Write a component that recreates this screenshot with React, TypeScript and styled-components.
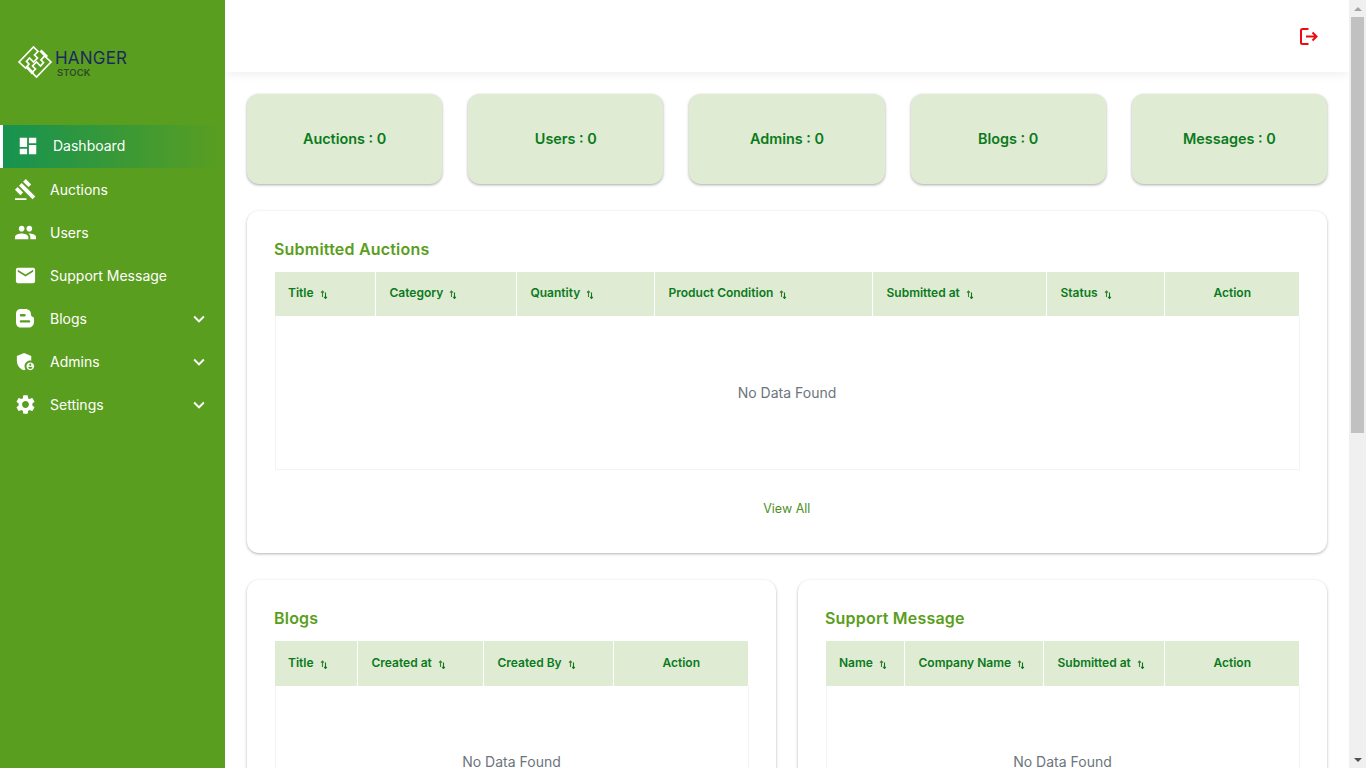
import React from "react";
import styled, { createGlobalStyle } from "styled-components";
import {
  MdDashboard,
  MdGavel,
  MdPeople,
  MdEmail,
  MdAdminPanelSettings,
  MdSettings,
  MdKeyboardArrowDown,
} from "react-icons/md";

const FONT = `"Inter", "Noto Sans", "Liberation Sans", sans-serif`;
const GREEN = "#5a9e20";
const DARK_GREEN = "#0a7a1c";
const PALE = "#dfebd3";

const GlobalStyle = createGlobalStyle`
  html, body { height: 100%; }
  body { margin: 0; background: #fff; font-family: ${FONT}; }
`;

type Column = { label: string; width: number; sortable?: boolean };

type NavEntry = {
  label: string;
  icon: React.ReactNode;
  active?: boolean;
  expandable?: boolean;
};

const BlogIcon = () => (
  <svg width="23" height="23" viewBox="0 0 23 23" fill="#fff">
    <path
      fillRule="evenodd"
      d="M6.500 2h5c3.500 0 5.500 2.300 5.500 5.500 0 1.500.8 2 1.500 2.200.8.200 1.500.8 1.500 1.800v3.500c0 3.500-2.500 5.500-5.500 5.500h-8C3.500 20.500 2 18 2 15V6.500C2 4 4 2 6.500 2zM7 7a1.200 1.200 0 0 0 0 2.400h3.500a1.200 1.200 0 0 0 0-2.400zM7 13.200a1.200 1.200 0 0 0 0 2.400h8a1.200 1.200 0 0 0 0-2.400z"
    />
  </svg>
);

const LogoutIcon = () => (
  <svg width="20" height="19" viewBox="0 0 20 19" fill="none" stroke="#ee0a12" strokeWidth="2">
    <path d="M9.500 2H3.500A1.500 1.500 0 0 0 2 3.500v12A1.500 1.500 0 0 0 3.500 17h6" />
    <path d="M7 9.500h10.500M13.500 5.500l4 4-4 4" />
  </svg>
);

const navItems: NavEntry[] = [
  { label: "Dashboard", icon: <MdDashboard size={22} />, active: true },
  { label: "Auctions", icon: <MdGavel size={23} /> },
  { label: "Users", icon: <MdPeople size={23} /> },
  { label: "Support Message", icon: <MdEmail size={23} /> },
  { label: "Blogs", icon: <BlogIcon />, expandable: true },
  { label: "Admins", icon: <MdAdminPanelSettings size={23} />, expandable: true },
  { label: "Settings", icon: <MdSettings size={23} />, expandable: true },
];

const stats = ["Auctions", "Users", "Admins", "Blogs", "Messages"];

const auctionColumns: Column[] = [
  { label: "Title", width: 100, sortable: true },
  { label: "Category", width: 141, sortable: true },
  { label: "Quantity", width: 138, sortable: true },
  { label: "Product Condition", width: 218, sortable: true },
  { label: "Submitted at", width: 174, sortable: true },
  { label: "Status", width: 118, sortable: true },
  { label: "Action", width: 135 },
];

const blogColumns: Column[] = [
  { label: "Title", width: 82, sortable: true },
  { label: "Created at", width: 126, sortable: true },
  { label: "Created By", width: 130, sortable: true },
  { label: "Action", width: 135 },
];

const supportColumns: Column[] = [
  { label: "Name", width: 78, sortable: true },
  { label: "Company Name", width: 139, sortable: true },
  { label: "Submitted at", width: 121, sortable: true },
  { label: "Action", width: 135 },
];

const SortIcon = () => (
  <SortSvg viewBox="0 0 8 9" width="8" height="9">
    <path d="M2.500 7V1M1 2.600 2.500 1 4 2.600" stroke="#3f7d2c" strokeWidth="1.100" fill="none" />
    <path d="M5.500 2.500V8.500M4.200 6.800l1.300 1.700 1.300-1.700" stroke="#0a7a1c" strokeWidth="1.100" fill="none" />
  </SortSvg>
);

const Logo = () => (
  <LogoRow>
    <svg width="42" height="40" viewBox="0 0 42 40" fill="none" stroke="#fff" strokeWidth="1.700">
      <path d="M5 20 19.500 5 24 9.500 20.500 13 23.500 16 19.500 20 15.500 16 12.500 19.500 15 22 11.500 26z" />
      <path d="M37 20 22.500 35 18 30.500 21.500 27 18.500 24 22.500 20 26.500 24 29.500 20.500 27 18 30.500 14z" />
      <path d="M26.500 8.500 33 15M13 25 19 31.500" strokeWidth="3" />
    </svg>
    <LogoText>
      <LogoTitle>HANGER</LogoTitle>
      <LogoSub>STOCK</LogoSub>
    </LogoText>
  </LogoRow>
);

const DataTable = ({ columns, compact }: { columns: Column[]; compact?: boolean }) => (
  <Table>
    <thead>
      <tr>
        {columns.map((col) => (
          <HeadCell key={col.label} $width={col.width} $center={!col.sortable} $compact={compact}>
            {col.label}
            {col.sortable && <SortIcon />}
          </HeadCell>
        ))}
      </tr>
    </thead>
    <tbody>
      <tr>
        <EmptyCell colSpan={columns.length} $compact={compact}>
          No Data Found
        </EmptyCell>
      </tr>
    </tbody>
  </Table>
);

export default function App() {
  return (
    <>
      <GlobalStyle />
      <Page>
        <Sidebar>
          <Logo />
          <Nav>
            {navItems.map((item) => (
              <NavItem key={item.label} $active={item.active}>
                <NavIcon>{item.icon}</NavIcon>
                <NavLabel>{item.label}</NavLabel>
                {item.expandable && <MdKeyboardArrowDown size={22} />}
              </NavItem>
            ))}
          </Nav>
        </Sidebar>
        <Main>
          <Header>
            <LogoutIcon />
          </Header>
          <Content>
            <StatGrid>
              {stats.map((name) => (
                <StatCard key={name}>{name} : 0</StatCard>
              ))}
            </StatGrid>
            <Panel>
              <PanelTitle>Submitted Auctions</PanelTitle>
              <DataTable columns={auctionColumns} />
              <ViewAll>View All</ViewAll>
            </Panel>
            <TwoColumns>
              <Panel>
                <PanelTitle>Blogs</PanelTitle>
                <DataTable columns={blogColumns} compact />
                <ViewAll>View All</ViewAll>
              </Panel>
              <Panel>
                <PanelTitle>Support Message</PanelTitle>
                <DataTable columns={supportColumns} compact />
                <ViewAll>View All</ViewAll>
              </Panel>
            </TwoColumns>
          </Content>
        </Main>
        <ScrollBar>
          <ScrollArrow $up />
          <ScrollTrack>
            <ScrollThumb />
          </ScrollTrack>
          <ScrollArrow />
        </ScrollBar>
      </Page>
    </>
  );
}

const Page = styled.div`
  display: flex;
  height: 100vh;
  overflow: hidden;
`;

const Sidebar = styled.aside`
  flex: 0 0 225px;
  background: ${GREEN};
  color: #fff;
`;

const LogoRow = styled.div`
  display: flex;
  align-items: center;
  height: 125px;
  padding: 0 0 1px 14px;
  box-sizing: border-box;
`;

const LogoText = styled.div`
  display: flex;
  flex-direction: column;
  margin: 3px 0 0 -1px;
`;

const LogoTitle = styled.span`
  font-size: 17px;
  line-height: 17px;
  color: #1c2a5e;
  letter-spacing: 0.2px;
`;

const LogoSub = styled.span`
  font-size: 9.500px;
  line-height: 11px;
  font-weight: 600;
  color: #2f4a2a;
  margin-left: 2px;
  letter-spacing: 0.1px;
`;

const Nav = styled.nav`
  display: flex;
  flex-direction: column;
`;

const NavItem = styled.div<{ $active?: boolean }>`
  display: flex;
  align-items: center;
  height: 43.200px;
  padding: 0 15px 1.500px 14px;
  box-sizing: border-box;
  font-size: 14px;
  ${(p) =>
    p.$active &&
    `
    border-left: 3px solid #fff;
    background: linear-gradient(90deg, #169350 0%, ${GREEN} 100%);
  `}
`;

const NavIcon = styled.span`
  display: flex;
  width: 36px;
  flex: none;
`;

const NavLabel = styled.span`
  flex: 1;
`;

const Main = styled.main`
  flex: 1;
  min-width: 0;
  overflow: hidden;
`;

const Header = styled.header`
  display: flex;
  align-items: center;
  justify-content: flex-end;
  height: 72px;
  padding-right: 30px;
  background: #fff;
  box-shadow: 0 2px 10px rgba(0, 0, 0, 0.07);
`;

const Content = styled.div`
  display: flex;
  flex-direction: column;
  gap: 27px;
  padding: 22px 22px 0;
`;

const StatGrid = styled.div`
  display: grid;
  grid-template-columns: repeat(5, minmax(0, 1fr));
  gap: 26px;
`;

const StatCard = styled.div`
  display: flex;
  align-items: center;
  justify-content: center;
  height: 90px;
  padding-bottom: 2px;
  box-sizing: border-box;
  background: ${PALE};
  border-radius: 12px;
  box-shadow: 0 1px 3px rgba(0, 0, 0, 0.35);
  color: ${DARK_GREEN};
  font-size: 14.400px;
  font-weight: 600;
`;

const Panel = styled.section`
  padding: 28px 28px 36px 27.500px;
  background: #fff;
  border-radius: 12px;
  box-shadow: 0 1px 3px rgba(0, 0, 0, 0.3);
`;

const PanelTitle = styled.h2`
  margin: 0 0 11px -0.500px;
  height: 22px;
  font-size: 16px;
  line-height: 20px;
  font-weight: 600;
  letter-spacing: 0.2px;
  color: ${GREEN};
`;

const Table = styled.table`
  width: 100%;
  border-collapse: collapse;
  table-layout: fixed;
`;

const HeadCell = styled.th<{ $width: number; $center?: boolean; $compact?: boolean }>`
  width: ${(p) => p.$width}px;
  height: ${(p) => (p.$compact ? 45 : 44)}px;
  padding: 0 13px ${(p) => (p.$compact ? 1 : 4)}px 14px;
  box-sizing: border-box;
  background: ${PALE};
  border-right: 1px solid #fff;
  color: ${DARK_GREEN};
  font-size: 12px;
  font-weight: 600;
  text-align: ${(p) => (p.$center ? "center" : "left")};
  &:first-child {
    padding-left: 13px;
  }
  &:last-child {
    border-right: 0;
  }
`;

const SortSvg = styled.svg`
  margin-left: 6px;
  vertical-align: -2px;
`;

const EmptyCell = styled.td<{ $compact?: boolean }>`
  height: ${(p) => (p.$compact ? 152 : 153)}px;
  padding: 1px 0 0;
  box-sizing: border-box;
  border: 1px solid #f4f4f4;
  border-top: 0;
  color: #6c757d;
  font-size: 14px;
  text-align: center;
`;

const ViewAll = styled.div`
  margin-top: 30px;
  height: 17px;
  color: #4f8f1f;
  font-size: 12.500px;
  line-height: 17px;
  text-align: center;
`;

const TwoColumns = styled.div`
  display: grid;
  grid-template-columns: repeat(2, minmax(0, 1fr));
  gap: 22px;
`;

const ScrollBar = styled.div`
  flex: 0 0 17px;
  display: flex;
  flex-direction: column;
  background: #f0f0f0;
`;

const ScrollArrow = styled.div<{ $up?: boolean }>`
  flex: 0 0 17px;
  display: flex;
  align-items: center;
  justify-content: center;
  &::before {
    content: "";
    border-left: 4px solid transparent;
    border-right: 4px solid transparent;
    ${(p) =>
      p.$up
        ? "border-bottom: 4px solid #a3a3a3;"
        : "border-top: 4px solid #505050;"}
  }
`;

const ScrollTrack = styled.div`
  flex: 1;
  padding: 0 2px;
`;

const ScrollThumb = styled.div`
  height: 416px;
  background: #c1c1c1;
`;
